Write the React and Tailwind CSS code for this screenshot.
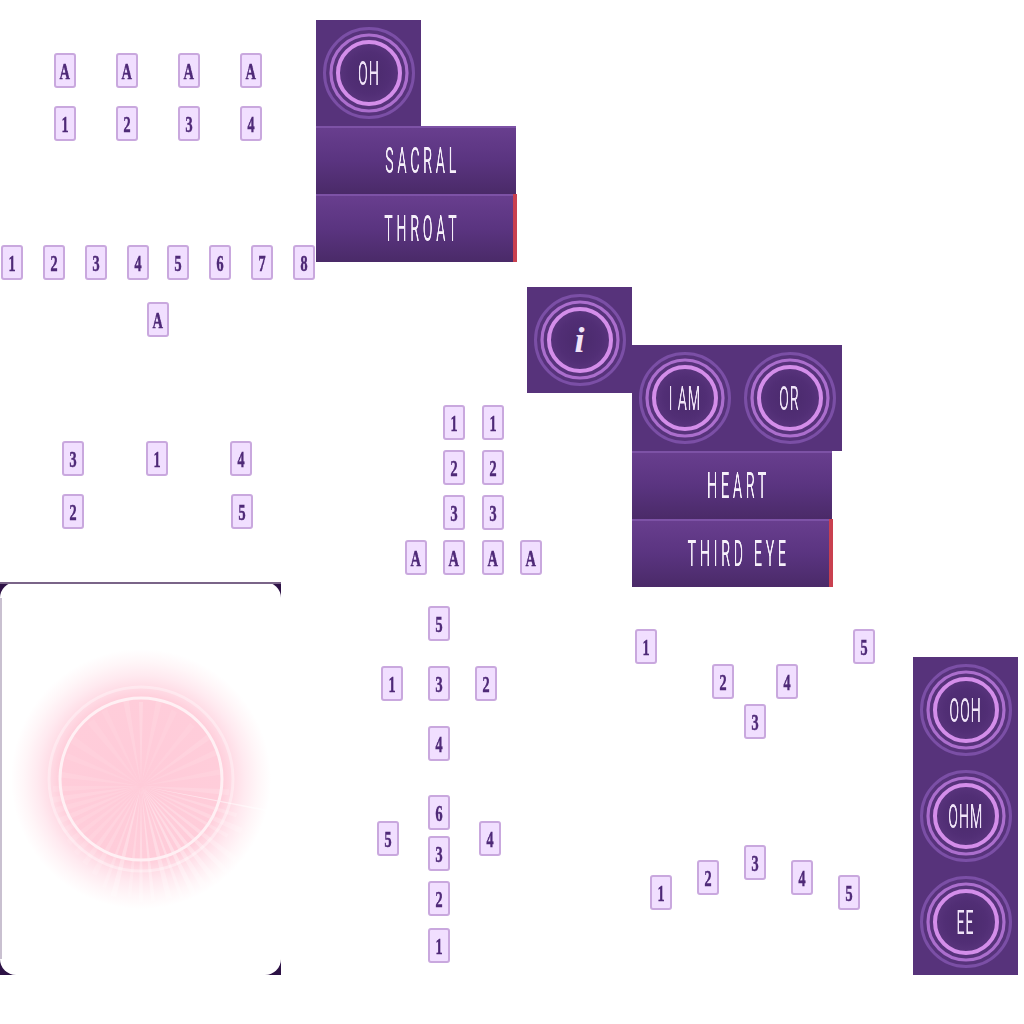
import React from 'react'

const tiles = [
  ['A', 'left-[54px] top-[53px]'], ['A', 'left-[116px] top-[53px]'], ['A', 'left-[178px] top-[53px]'], ['A', 'left-[240px] top-[53px]'],
  ['1', 'left-[54px] top-[106px]'], ['2', 'left-[116px] top-[106px]'], ['3', 'left-[178px] top-[106px]'], ['4', 'left-[240px] top-[106px]'],
  ['1', 'left-[1px] top-[245px]'], ['2', 'left-[43px] top-[245px]'], ['3', 'left-[85px] top-[245px]'], ['4', 'left-[127px] top-[245px]'],
  ['5', 'left-[167px] top-[245px]'], ['6', 'left-[209px] top-[245px]'], ['7', 'left-[251px] top-[245px]'], ['8', 'left-[293px] top-[245px]'],
  ['A', 'left-[147px] top-[302px]'],
  ['3', 'left-[62px] top-[441px]'], ['1', 'left-[146px] top-[441px]'], ['4', 'left-[230px] top-[441px]'],
  ['2', 'left-[62px] top-[494px]'], ['5', 'left-[231px] top-[494px]'],
  ['1', 'left-[443px] top-[405px]'], ['1', 'left-[482px] top-[405px]'],
  ['2', 'left-[443px] top-[450px]'], ['2', 'left-[482px] top-[450px]'],
  ['3', 'left-[443px] top-[495px]'], ['3', 'left-[482px] top-[495px]'],
  ['A', 'left-[405px] top-[540px]'], ['A', 'left-[443px] top-[540px]'], ['A', 'left-[482px] top-[540px]'], ['A', 'left-[520px] top-[540px]'],
  ['5', 'left-[428px] top-[606px]'], ['1', 'left-[381px] top-[666px]'], ['3', 'left-[428px] top-[666px]'], ['2', 'left-[475px] top-[666px]'], ['4', 'left-[428px] top-[726px]'],
  ['6', 'left-[428px] top-[795px]'], ['5', 'left-[377px] top-[821px]'], ['4', 'left-[479px] top-[821px]'],
  ['3', 'left-[428px] top-[836px]'], ['2', 'left-[428px] top-[881px]'], ['1', 'left-[428px] top-[928px]'],
  ['1', 'left-[635px] top-[629px]'], ['5', 'left-[853px] top-[629px]'], ['2', 'left-[712px] top-[664px]'], ['4', 'left-[776px] top-[664px]'], ['3', 'left-[744px] top-[704px]'],
  ['1', 'left-[650px] top-[875px]'], ['2', 'left-[697px] top-[860px]'], ['3', 'left-[744px] top-[845px]'], ['4', 'left-[791px] top-[860px]'], ['5', 'left-[838px] top-[875px]'],
]

function Tile({ label, pos }) {
  return (
    <div className={`absolute ${pos} flex h-[35px] w-[22px] items-center justify-center rounded-[3px] border-2 border-[#c9a8de] bg-[#f1dfff]`}>
      <span className="scale-x-[0.6] font-['Liberation_Serif',serif] text-[24px] font-bold leading-none text-[#4f2a78] will-change-transform [-webkit-text-stroke:0.5px_#4f2a78]">{label}</span>
    </div>
  )
}

function Rings({ children }) {
  return (
    <div className="relative flex h-[106px] w-[105px] shrink-0 items-center justify-center">
      <svg className="absolute left-[5px] top-[5px] blur-[0.4px]" width="96" height="96" viewBox="0 0 96 96" fill="none">
        <defs>
          <radialGradient id="well">
            <stop offset="0" stopColor="#4a2a6c" />
            <stop offset="0.7" stopColor="#512e75" />
            <stop offset="1" stopColor="#58347c" />
          </radialGradient>
        </defs>
        <circle cx="48" cy="48" r="30" fill="url(#well)" />
        <circle cx="48" cy="48" r="44.5" stroke="#7b4fa6" strokeWidth="3" />
        <circle cx="48" cy="48" r="38" stroke="#ab6ecd" strokeWidth="3.2" />
        <circle cx="48" cy="48" r="31" stroke="#d48eea" strokeWidth="4" />
      </svg>
      <div className="relative">{children}</div>
    </div>
  )
}

function Sound({ text }) {
  return (
    <span className="inline-block scale-x-[0.42] whitespace-nowrap font-['Roboto',sans-serif] text-[34px] font-normal leading-none tracking-[2px] text-[#f0e4f8] will-change-transform">
      {text}
    </span>
  )
}

function Chakra({ text, pos, mark }) {
  return (
    <div className={`absolute ${pos} flex h-[68px] w-[200px] items-center justify-center border-t-2 border-[#7d52a6] bg-gradient-to-b from-[#683e8e] via-[#5a3480] to-[#4a2a68] pl-[13px]`}>
      <span className="inline-block scale-x-[0.4] whitespace-nowrap font-['Roboto',sans-serif] text-[36px] font-normal leading-none tracking-[9px] text-[#f6f0fa] will-change-transform">
        {text}
      </span>
      {mark && <div className="absolute right-[-1px] top-[-2px] h-[68px] w-[4px] bg-[#c9404f]" />}
    </div>
  )
}

// fixed ray list so the burst stays the same on every render: angle, half width at tip, length, opacity
const rays = [
  [-172, 3, 84, 0.1], [-158, 3, 80, 0.08], [-146, 4, 84, 0.08], [-128, 4, 82, 0.08], [-116, 3, 84, 0.08], [-100, 3, 88, 0.12], [-90, 2, 84, 0.18], [-78, 3, 86, 0.1],
  [-66, 3, 82, 0.08], [-50, 3, 80, 0.08], [-36, 3, 86, 0.12], [-24, 3, 84, 0.1], [-10, 3, 84, 0.1], [4, 3, 88, 0.14], [11, 1, 136, 0.5], [17, 2, 100, 0.18], [24, 3, 110, 0.18],
  [30, 2, 100, 0.18], [38, 3, 120, 0.22], [45, 3, 128, 0.28], [52, 3, 122, 0.28], [58, 3, 118, 0.28], [64, 3, 128, 0.32], [70, 2, 122, 0.28], [76, 3, 116, 0.28], [84, 2, 116, 0.28],
  [90, 2, 116, 0.26], [96, 2, 112, 0.18], [104, 3, 114, 0.28], [110, 2, 108, 0.18], [118, 3, 100, 0.14], [126, 3, 96, 0.14], [134, 3, 94, 0.1], [142, 3, 92, 0.1], [150, 3, 90, 0.1],
  [157, 3, 90, 0.12], [164, 3, 88, 0.1], [171, 3, 90, 0.12], [178, 3, 88, 0.1],
]

function Burst() {
  const cx = 141
  const cy = 786
  return (
    <svg className="absolute left-0 top-0" width="281" height="393" viewBox="0 582 281 393">
      <defs>
        <radialGradient id="glow" cx="141" cy="779" r="130" gradientUnits="userSpaceOnUse">
          <stop offset="0" stopColor="#ffcbd9" />
          <stop offset="0.62" stopColor="#ffcdda" />
          <stop offset="0.7" stopColor="#ffdbe5" />
          <stop offset="0.8" stopColor="#ffeaf0" />
          <stop offset="0.9" stopColor="#fff6f8" />
          <stop offset="1" stopColor="#ffffff" />
        </radialGradient>
      </defs>
      <circle cx="141" cy="779" r="130" fill="url(#glow)" />
      {rays.map(([deg, w, len, alpha]) => {
        const a = (deg * Math.PI) / 180
        const tx = cx + Math.cos(a) * len
        const ty = cy + Math.sin(a) * len
        const nx = -Math.sin(a) * w
        const ny = Math.cos(a) * w
        return (
          <path
            key={deg}
            d={`M${cx} ${cy}L${tx + nx} ${ty + ny}L${tx - nx} ${ty - ny}Z`}
            fill="#ffffff"
            fillOpacity={alpha}
          />
        )
      })}
      <circle cx="141" cy="779" r="92" fill="none" stroke="#ffffff" strokeOpacity="0.35" strokeWidth="3" />
      <circle cx="141" cy="779" r="81" fill="none" stroke="#fff0f4" strokeWidth="3" />
    </svg>
  )
}

export default function App() {
  return (
    <div className="relative h-[1024px] w-[1024px] overflow-hidden bg-white">
      {tiles.map(([label, pos]) => (
        <Tile key={pos} label={label} pos={pos} />
      ))}

      <div className="absolute left-[316px] top-[20px] bg-[#57337b]">
        <Rings><Sound text="OH" /></Rings>
      </div>
      <Chakra text="SACRAL" pos="left-[316px] top-[126px]" />
      <Chakra text="THROAT" pos="left-[316px] top-[194px]" mark />

      <div className="absolute left-[527px] top-[287px] bg-[#57337b]">
        <Rings>
          <span className="font-['Liberation_Serif',serif] text-[36px] font-bold italic leading-none text-[#f0e4f8]">i</span>
        </Rings>
      </div>
      <div className="absolute left-[632px] top-[345px] flex bg-[#57337b]">
        <Rings><Sound text="I AM" /></Rings>
        <Rings><Sound text="OR" /></Rings>
      </div>
      <Chakra text="HEART" pos="left-[632px] top-[451px]" />
      <Chakra text="THIRD EYE" pos="left-[632px] top-[519px]" mark />

      <div className="absolute left-[913px] top-[657px] flex flex-col bg-[#57337b]">
        <Rings><Sound text="OOH" /></Rings>
        <Rings><Sound text="OHM" /></Rings>
        <Rings><Sound text="EE" /></Rings>
      </div>

      {/* glow card */}
      <div className="absolute left-0 top-[582px] h-[393px] w-[281px] bg-[#2d1245]">
        <div className="relative h-full w-full overflow-hidden rounded-[16px] bg-white">
          <Burst />
        </div>
        <div className="absolute left-0 right-0 top-0 h-[2px] bg-[#7a6488]" />
        <div className="absolute bottom-[16px] left-0 top-[16px] w-[2px] bg-[#c9c0d0]" />
      </div>
    </div>
  )
}
